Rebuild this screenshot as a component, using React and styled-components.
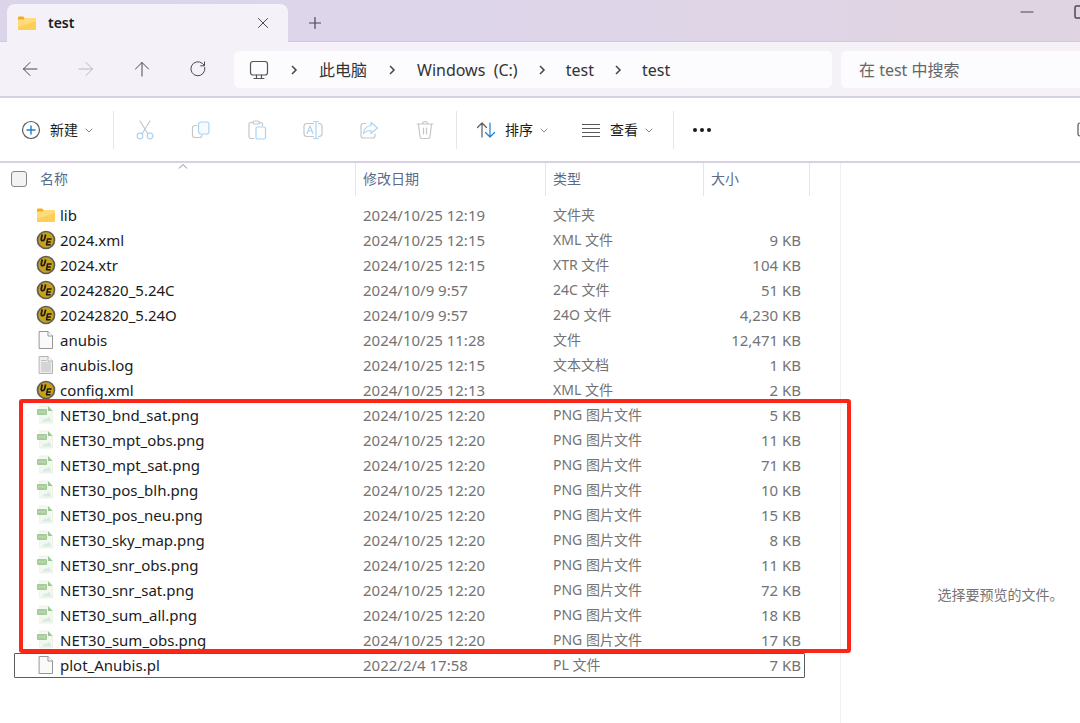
import React from "react";
import styled, { createGlobalStyle } from "styled-components";

const GlobalStyle = createGlobalStyle`
  * { box-sizing: border-box; }
  html, body { margin: 0; padding: 0; background: #fff; }
  body {
    overflow: hidden;
    font-family: "Noto Sans", "Noto Sans CJK SC", sans-serif;
    font-size: 15px;
    color: #1b1b1b;
  }
  button, input { font: inherit; color: inherit; }
`;

const Window = styled.div`
  width: calc(100% + 80px);
  min-height: 100vh;
  display: flex;
  flex-direction: column;
`;

const TitleBar = styled.header`
  height: 42px;
  display: flex;
  align-items: flex-end;
  padding-left: 7px;
  background: linear-gradient(90deg, #dcd5ea 0%, #ded5ea 45%, #dfd5e7 62%, #e0d4e3 80%, #dfd4e0 100%);
  box-shadow: inset 0 -1px 0 #d2c8de;
`;

const Tab = styled.div`
  position: relative;
  width: 281px;
  height: 38px;
  display: flex;
  align-items: center;
  gap: 11px;
  padding: 0 14px 0 10px;
  border-radius: 8px 8px 0 0;
  background: #f4f1f9;
`;

const TabTitle = styled.span`
  flex: 1;
  font-size: 14px;
  line-height: 20px;
  font-weight: 600;
`;

const IconButton = styled.button`
  display: flex;
  align-items: center;
  justify-content: center;
  flex: none;
  width: ${(p) => p.$size || 24}px;
  height: ${(p) => p.$size || 24}px;
  padding: 0;
  border: 0;
  background: none;
  color: ${(p) => p.$tone || "#4a4850"};
`;

const NewTab = styled(IconButton)`
  width: 54px;
  height: 38px;
`;

const Caption = styled.div`
  align-self: flex-start;
  margin-left: auto;
  display: flex;
  padding-right: 67px;
  gap: 30px;
`;

const NavBar = styled.nav`
  height: 56px;
  display: flex;
  align-items: center;
  gap: 9px;
  padding: 0 12px 0 2px;
  background: linear-gradient(90deg, #f4f1f9 0%, #f4f1f8 55%, #f6f1f6 100%);
  border-bottom: 2px solid #d9cfe4;
`;

const NavButtons = styled.div`
  display: flex;
  width: 223px;
`;

const Address = styled.ol`
  flex: 1;
  height: 37px;
  margin: 0;
  padding: 1px 0 0 15px;
  list-style: none;
  display: flex;
  align-items: center;
  border-radius: 5px;
  background: #fcfbfe;
  font-size: 16px;
  line-height: 24px;
`;

const Crumb = styled.li`
  display: flex;
  align-items: center;
  color: #333;
  white-space: pre;

  a { color: inherit; text-decoration: none; }
`;

const Separator = styled.svg`
  margin: 0 ${(p) => p.$gap || 20}px;
`;

const Search = styled.input`
  width: 307px;
  height: 37px;
  padding: 2px 18px 0;
  border: 0;
  border-radius: 5px;
  background: #fcfbfd;
  font-size: 16px;
  &::placeholder { color: #666; opacity: 1; }
`;

const ToolBar = styled.div`
  height: 65px;
  display: flex;
  align-items: center;
  padding: 0 67px 0 21px;
  border-bottom: 2px solid #dad0e4;
  background: #fff;
`;

const MenuButton = styled.button`
  display: flex;
  align-items: center;
  gap: 9px;
  padding: 0;
  border: 0;
  background: none;
  font-size: 14px;
  line-height: 20px;
  white-space: nowrap;

  & > svg:last-child { margin-left: -3px; }
`;

const Rule = styled.span`
  width: 1px;
  height: 38px;
  margin: 0 ${(p) => p.$right}px 0 ${(p) => p.$left}px;
  background: #e6e6e6;
`;

const MenuGap = styled.div`
  display: flex;
  gap: 32px;
`;

const ToolGroup = styled.div`
  display: flex;
`;

const Spacer = styled.span`
  flex: 1;
`;

const Body = styled.main`
  flex: 1;
  display: flex;
`;

const FilePane = styled.section`
  position: relative;
  width: 841px;
  flex: none;
  padding-left: 10px;
  border-right: 1px solid #efefef;
`;

const FileTable = styled.table`
  width: 800px;
  table-layout: fixed;
  border-collapse: collapse;
`;

const HeadCell = styled.th`
  width: ${(p) => p.$width}px;
  padding: 0 0 7px;
  text-align: left;
  font-size: 14px;
  line-height: 20px;
  font-weight: 400;
  color: #596c89;
`;

const HeadInner = styled.div`
  position: relative;
  height: 33px;
  display: flex;
  align-items: center;
  gap: 13px;
  padding: 0 0 2px ${(p) => p.$left}px;
  border-right: 1px solid #e5e5e5;
`;

const SortMark = styled.svg`
  position: absolute;
  top: 0;
  left: 50%;
  margin-left: -5px;
`;

const CheckBox = styled.input`
  appearance: none;
  width: 16px;
  height: 16px;
  margin: 0;
  border: 1px solid #868686;
  border-radius: 3px;
  background: #f3f3f3;
`;

const Row = styled.tr`
  position: relative;
  height: 25px;

  ${(p) => p.$focused && `
    &::after {
      content: "";
      position: absolute;
      inset: 0 5px 0 4px;
      border: 1px solid #5c5c5c;
      border-radius: 1px;
    }
  `}
`;

const Cell = styled.td`
  padding: 0 9px 2px 7px;
  color: #737373;
  font-size: ${(p) => p.$size || 15}px;
  line-height: 20px;
  white-space: nowrap;
  text-align: ${(p) => p.$align || "left"};
`;

const NameCell = styled(Cell)`
  padding-left: 26px;
  color: #1b1b1b;
`;

const FileName = styled.span`
  display: flex;
  align-items: center;
  gap: 4px;

  & > svg { flex: none; }
`;

const Highlight = styled.div`
  position: absolute;
  z-index: 1;
  top: 236px;
  left: 19px;
  width: 832px;
  height: 254px;
  border: 4px solid #fb2618;
  border-radius: 3px;
  pointer-events: none;
`;

const Preview = styled.aside`
  flex: 1;
  padding-top: 422px;
  text-align: center;
  font-size: 14px;
  line-height: 20px;
  color: #757575;
`;

const Svg = ({ size = 20, children, ...rest }) => (
  <svg width={size} height={size} viewBox={`0 0 ${size} ${size}`} fill="none" stroke="currentColor"
    strokeWidth="1.2" strokeLinecap="round" strokeLinejoin="round" aria-hidden="true" {...rest}>
    {children}
  </svg>
);

const FolderIcon = () => (
  <Svg stroke="none">
    <path d="M1 4.500Q1 3.500 2 3.500H6Q7 3.500 7.200 5H9V9H1Z" fill="#f7ae16" />
    <path d="M1 7Q1 6.500 1.800 6.500H6.500L8 5H18Q19 5 19 6V16Q19 17 18 17H2Q1 17 1 16Z" fill="#ffdb7d" />
    <path d="M1 14V16Q1 17 2 17H18Q19 17 19 16V8Z" fill="#fdcb4b" opacity=".75" />
  </Svg>
);

const UltraEditIcon = () => (
  <Svg>
    <circle cx="10" cy="10" r="8.500" fill="#c6a01f" stroke="#5f5d55" strokeWidth="1.700" />
    <path d="M6.200 4.500 5.300 8.700Q5 10.700 6.700 10.700 8.300 10.700 8.700 8.700L9.600 4.500" stroke="#1d1a10" strokeWidth="1.700" strokeLinecap="butt" />
    <path d="M15.600 9H11.600L10.500 14.800H14.600M11.100 11.900H14.800" stroke="#1d1a10" strokeWidth="1.500" strokeLinecap="butt" />
  </Svg>
);

const PageIcon = ({ lined }) => (
  <Svg strokeWidth="1">
    <path d="M3.500 1.500H12L16.500 6V18.500H3.500Z" fill={lined ? "#eeeeee" : "#fafafa"} stroke={lined ? "#b4b4b4" : "#969696"} />
    <path d="M12 1.500V6H16.500" fill="#fff" stroke={lined ? "#b4b4b4" : "#969696"} />
    {lined && <path d="M5.500 5.500H10M5.500 8H14.500M5.500 10H14.500M5.500 12H14.500M5.500 14H14.500M5.500 16H14.500" stroke="#bcbcbc" />}
  </Svg>
);

const PngIcon = () => (
  <Svg stroke="none">
    <path d="M4 1H12L16.500 5.500V18H4Z" fill="#f3f8f1" stroke="#e1ecde" strokeWidth=".6" />
    <path d="M12 1 16.500 6H12Z" fill="#9cc993" />
    <rect x="1" y="4" width="10" height="6" rx="1" fill="#a3ca97" />
    <path d="M3 8V6H4.500V7H3M5.700 8V6L7 8V6M9.500 6H8V8H9.500" stroke="#c9e1c1" strokeWidth=".6" />
    <path d="M6 16.500 9 13 10.500 14 13 11.500 15.500 16.500Z" fill="#d8ebe3" />
  </Svg>
);

const icons = {
  folder: <FolderIcon />,
  ue: <UltraEditIcon />,
  page: <PageIcon />,
  log: <PageIcon lined />,
  png: <PngIcon />,
};

const Caret = () => (
  <Svg size={10} stroke="#8a8a8a" strokeWidth="1"><path d="M2 4 5 7 8 4" /></Svg>
);

const Chevron = ({ gap }) => (
  <Separator $gap={gap} width="10" height="12" viewBox="0 0 10 12" fill="none" stroke="#444" strokeWidth="1.500" aria-hidden="true">
    <path d="M3 2 7 6 3 10" />
  </Separator>
);

const PALE = "#a9d5f5";
const GREY = "#c6c6c6";

const tools = [
  ["剪切", <Svg stroke={GREY} key="i"><path d="M5 1 13 14M15 1 7 14" /><circle cx="5" cy="16" r="2.800" stroke={PALE} fill="#fff" /><circle cx="15" cy="16" r="2.800" stroke={PALE} fill="#fff" /></Svg>],
  ["复制", <Svg stroke={GREY} key="i"><path d="M5.500 5.500H4Q1.500 5.500 1.500 8V15Q1.500 17.500 4 17.500H8.500Q11 17.500 11 15" /><rect x="7.500" y="2" width="10.500" height="12" rx="2.500" stroke={PALE} fill="#f7fbfe" /></Svg>],
  ["粘贴", <Svg stroke={GREY} key="i"><path d="M7 18.500H3.500Q2 18.500 2 17V4Q2 2.500 3.500 2.500H6M12 2.500H14Q15.500 2.500 15.500 4V6" /><rect x="6" y="1" width="6.500" height="3" rx="1.500" /><rect x="9" y="7" width="9.500" height="12" rx="1.500" stroke={PALE} /></Svg>],
  ["重命名", <Svg stroke={GREY} key="i"><path d="M10.500 3.500H4Q1 3.500 1 6.500V13.500Q1 16.500 4 16.500H10.500M15.500 3.500H16Q19 3.500 19 6.500V13.500Q19 16.500 16 16.500H15.500" /><path d="M4 13.500 7 6 10 13.500M5 11H9M13 1.500V18.500M10.500 1.500H15.500M10.500 18.500H15.500" stroke={PALE} /></Svg>],
  ["共享", <Svg stroke={GREY} key="i"><path d="M7 3.500H4.500Q2 3.500 2 6V15.500Q2 18 4.500 18H13.500Q16 18 16 15.500V14" /><path d="M12 2.500 18.500 8 12 13.500V10.500Q7 10.500 4.500 13.500 5 6.500 12 5.500Z" stroke={PALE} /></Svg>],
  ["删除", <Svg stroke={GREY} key="i"><path d="M2 4H18M7.500 4Q7.500 1.500 10 1.500T12.500 4M3.500 4 5 16.500Q5.200 18.500 7 18.500H13Q14.800 18.500 15 16.500L16.500 4M8.500 8V14M11.500 8V14" /></Svg>],
];

const png = (name, size) => ["png", `NET30_${name}.png`, "2024/10/25 12:20", "PNG 图片文件", size];

const files = [
  ["folder", "lib", "2024/10/25 12:19", "文件夹", ""],
  ["ue", "2024.xml", "2024/10/25 12:15", "XML 文件", "9 KB"],
  ["ue", "2024.xtr", "2024/10/25 12:15", "XTR 文件", "104 KB"],
  ["ue", "20242820_5.24C", "2024/10/9 9:57", "24C 文件", "51 KB"],
  ["ue", "20242820_5.24O", "2024/10/9 9:57", "24O 文件", "4,230 KB"],
  ["page", "anubis", "2024/10/25 11:28", "文件", "12,471 KB"],
  ["log", "anubis.log", "2024/10/25 12:15", "文本文档", "1 KB"],
  ["ue", "config.xml", "2024/10/25 12:13", "XML 文件", "2 KB"],
  png("bnd_sat", "5 KB"),
  png("mpt_obs", "11 KB"),
  png("mpt_sat", "71 KB"),
  png("pos_blh", "10 KB"),
  png("pos_neu", "15 KB"),
  png("sky_map", "8 KB"),
  png("snr_obs", "11 KB"),
  png("snr_sat", "72 KB"),
  png("sum_all", "18 KB"),
  png("sum_obs", "17 KB"),
  ["page", "plot_Anubis.pl", "2022/2/4 17:58", "PL 文件", "7 KB"],
];

const columns = [
  ["修改日期", 190],
  ["类型", 158],
  ["大小", 106],
];

export default function App() {
  return (
    <>
      <GlobalStyle />
      <Window>
        <TitleBar>
          <Tab>
            <FolderIcon />
            <TabTitle>test</TabTitle>
            <IconButton $size={22} aria-label="关闭标签页">
              <Svg size={12} strokeWidth="1"><path d="M1.500 1.500 10.500 10.500M10.500 1.500 1.500 10.500" /></Svg>
            </IconButton>
          </Tab>
          <NewTab aria-label="新标签页">
            <Svg size={12}><path d="M6 .5V11.500M.5 6H11.500" /></Svg>
          </NewTab>
          <Caption>
            <IconButton aria-label="最小化"><Svg size={14}><path d="M1 7H13" /></Svg></IconButton>
            <IconButton aria-label="最大化"><Svg size={14} strokeWidth="1.500"><rect x="1" y="1" width="12" height="12" rx="1.500" /></Svg></IconButton>
          </Caption>
        </TitleBar>

        <NavBar>
          <NavButtons>
            <IconButton $size={56} aria-label="后退"><Svg size={16} strokeWidth="1"><path d="M15 8H1.500M8 1.500 1.500 8 8 14.500" /></Svg></IconButton>
            <IconButton $size={56} $tone="#bab7c0" aria-label="前进"><Svg size={16} strokeWidth="1"><path d="M1 8H14.500M8 1.500 14.500 8 8 14.500" /></Svg></IconButton>
            <IconButton $size={56} aria-label="向上"><Svg size={16} strokeWidth="1"><path d="M8 15V1.500M1.500 8 8 1.500 14.500 8" /></Svg></IconButton>
            <IconButton $size={56} aria-label="刷新"><Svg size={16} strokeWidth="1"><path d="M14.800 6.500A7 7 0 1 1 12.500 2.500L14.500 4.500M14.500 1V4.800H10.700" /></Svg></IconButton>
          </NavButtons>
          <Address>
            <Crumb>
              <Svg size={20} stroke="#555"><rect x="1.500" y="1.500" width="17" height="13.500" rx="2.500" /><path d="M7.500 15V18M12.500 15V18M5 18.500H15" /></Svg>
              <Chevron />
            </Crumb>
            <Crumb><a href="#pc">此电脑</a><Chevron /></Crumb>
            <Crumb><a href="#c">{"Windows  (C:)"}</a><Chevron gap={19} /></Crumb>
            <Crumb><a href="#c-test">test</a><Chevron gap={19} /></Crumb>
            <Crumb><a href="#c-test-test">test</a></Crumb>
          </Address>
          <Search aria-label="搜索" placeholder="在 test 中搜索" />
        </NavBar>

        <ToolBar>
          <MenuButton>
            <Svg stroke="#5a5a5a"><circle cx="10" cy="10" r="8.500" /><path d="M10 6V14M6 10H14" stroke="#1b80d0" strokeWidth="1.400" /></Svg>
            新建<Caret />
          </MenuButton>
          <Rule $left={19} $right={3} />
          <ToolGroup>
            {tools.map(([label, icon]) => (
              <IconButton key={label} $size={56} aria-label={label}>{icon}</IconButton>
            ))}
          </ToolGroup>
          <Rule $left={3} $right={19} />
          <MenuGap>
            <MenuButton>
              <Svg stroke="#5a5a5a"><path d="M6 17V3M1.500 7.500 6 3 10.500 7.500" /><path d="M14 3V17M9.500 12.500 14 17 18.500 12.500" stroke="#1b80d0" /></Svg>
              排序<Caret />
            </MenuButton>
            <MenuButton>
              <Svg stroke="#5a5a5a" strokeLinecap="butt"><path d="M1 4.500H19M1 8.500H19M1 12.500H19M1 16.500H19" /></Svg>
              查看<Caret />
            </MenuButton>
          </MenuGap>
          <Rule $left={19} $right={18} />
          <IconButton $size={20} $tone="#1b1b1b" aria-label="更多">
            <Svg stroke="none" fill="currentColor"><circle cx="3" cy="10" r="2" /><circle cx="10" cy="10" r="2" /><circle cx="17" cy="10" r="2" /></Svg>
          </IconButton>
          <Spacer />
          <IconButton $size={18} $tone="#555" aria-label="预览">
            <Svg size={18}><rect x="3" y="2" width="14" height="13" rx="2" /><path d="M11 2V15" /></Svg>
          </IconButton>
        </ToolBar>

        <Body>
          <FilePane>
            <FileTable>
              <thead>
                <tr>
                  <HeadCell $width={346}>
                    <HeadInner $left={1}>
                      <CheckBox type="checkbox" aria-label="全选" />
                      名称
                      <SortMark width="10" height="7" viewBox="0 0 10 7" fill="none" stroke="#888" aria-hidden="true"><path d="M1 5.500 5 1.500 9 5.500" /></SortMark>
                    </HeadInner>
                  </HeadCell>
                  {columns.map(([label, width]) => (
                    <HeadCell key={label} $width={width}><HeadInner $left={7}>{label}</HeadInner></HeadCell>
                  ))}
                </tr>
              </thead>
              <tbody>
                {files.map(([icon, name, date, type, size], i) => (
                  <Row key={name} $focused={i === files.length - 1}>
                    <NameCell><FileName>{icons[icon]}{name}</FileName></NameCell>
                    <Cell>{date}</Cell>
                    <Cell $size={14}>{type}</Cell>
                    <Cell $align="right">{size}</Cell>
                  </Row>
                ))}
              </tbody>
            </FileTable>
            <Highlight />
          </FilePane>
          <Preview>选择要预览的文件。</Preview>
        </Body>
      </Window>
    </>
  );
}
